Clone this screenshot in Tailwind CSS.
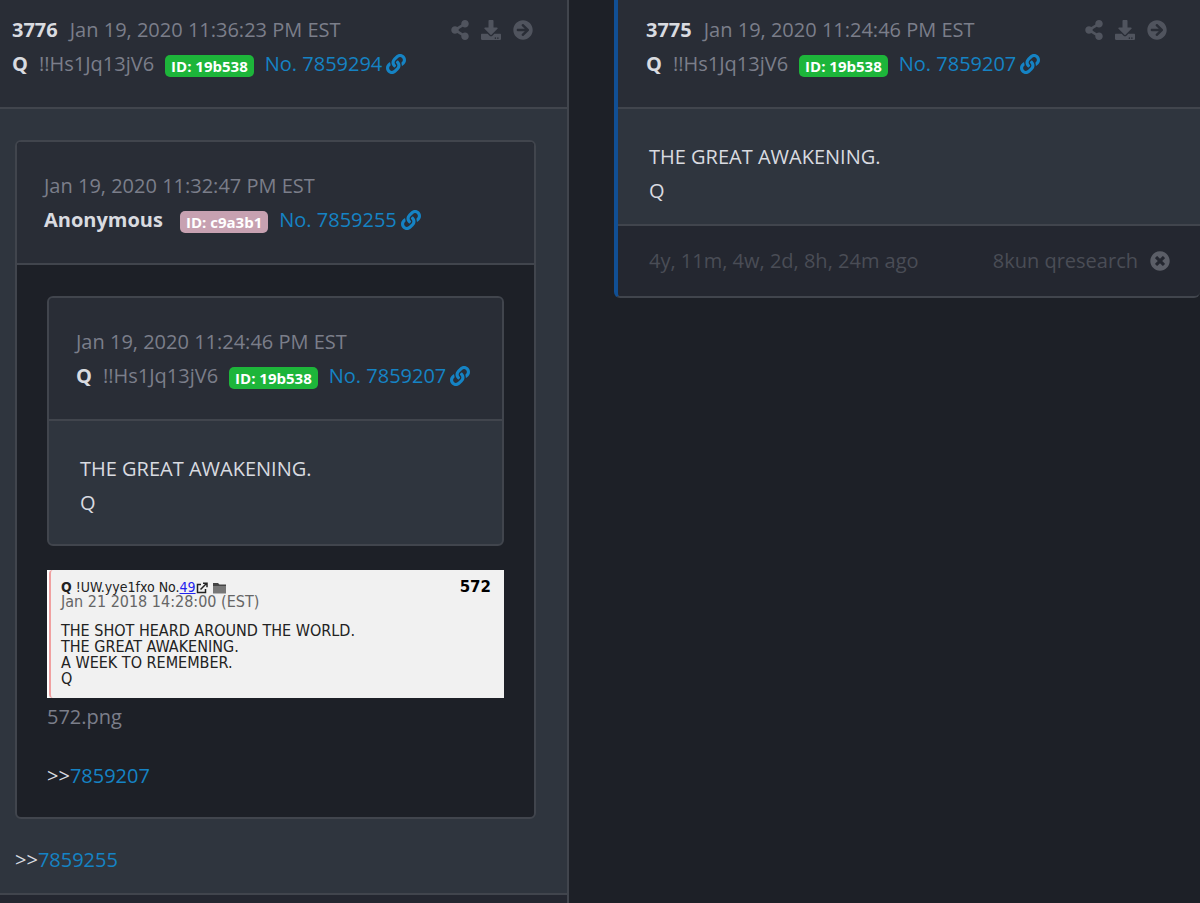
<!DOCTYPE html>
<html lang="en">
<head>
    <meta charset="UTF-8">
    <meta name="viewport" content="width=device-width, initial-scale=1.0">
    <title>Posts</title>
    <script src="https://cdn.jsdelivr.net/npm/@tailwindcss/browser@4"></script>
</head>
<body class="min-h-screen bg-[#1d2027] font-['Open_Sans',sans-serif] text-[20px] leading-[34px] text-[#7b7e8a]">
    <!-- Icon sprites -->
    <svg class="hidden">
        <symbol id="share" viewBox="0 0 448 512"><path d="M352 320c-22.608 0-43.387 7.819-59.79 20.895l-102.486-64.054a96.551 96.551 0 0 0 0-41.683l102.486-64.054C308.613 184.181 329.392 192 352 192c53.019 0 96-42.981 96-96S405.019 0 352 0s-96 42.981-96 96c0 7.158.79 14.13 2.276 20.841L155.79 180.895C139.387 167.819 118.608 160 96 160c-53.019 0-96 42.981-96 96s42.981 96 96 96c22.608 0 43.387-7.819 59.79-20.895l102.486 64.054A96.301 96.301 0 0 0 256 416c0 53.019 42.981 96 96 96s96-42.981 96-96-42.981-96-96-96z"/></symbol>
        <symbol id="download" viewBox="0 0 512 512"><path d="M216 0h80c13.300 0 24 10.700 24 24v168h87.700c17.800 0 26.700 21.500 14.100 34.100L269.700 378.300c-7.500 7.500-19.800 7.500-27.300 0L90.100 226.100c-12.600-12.600-3.700-34.100 14.100-34.100H192V24c0-13.300 10.700-24 24-24zm296 376v112c0 13.300-10.700 24-24 24H24c-13.300 0-24-10.700-24-24V376c0-13.300 10.700-24 24-24h146.700l49 49c20.100 20.100 52.500 20.100 72.600 0l49-49H488c13.300 0 24 10.700 24 24zm-124 88c0-11-9-20-20-20s-20 9-20 20 9 20 20 20 20-9 20-20zm64 0c0-11-9-20-20-20s-20 9-20 20 9 20 20 20 20-9 20-20z"/></symbol>
        <symbol id="arrow" viewBox="0 0 512 512"><path d="M256 8c137 0 248 111 248 248S393 504 256 504 8 393 8 256 119 8 256 8zm-28.900 143.600l75.500 72.400H120c-13.300 0-24 10.700-24 24v16c0 13.300 10.700 24 24 24h182.600l-75.500 72.400c-9.700 9.300-9.900 24.800-.4 34.300l11 10.900c9.400 9.400 24.600 9.400 33.900 0L404.300 273c9.400-9.400 9.400-24.600 0-33.900L271.600 106.300c-9.400-9.400-24.600-9.400-33.900 0l-11 10.900c-9.500 9.600-9.300 25.100.4 34.400z"/></symbol>
        <symbol id="link" viewBox="0 0 512 512"><path d="M326.612 185.391c59.747 59.809 58.927 155.698.36 214.590-.11.12-.24.25-.36.37l-67.200 67.200c-59.270 59.270-155.699 59.262-214.960 0-59.270-59.260-59.270-155.700 0-214.960l37.106-37.106c9.840-9.840 26.786-3.300 27.294 10.606.648 17.722 3.826 35.527 9.690 52.721 1.986 5.822.567 12.262-3.783 16.612l-13.087 13.087c-28.026 28.026-28.905 73.660-1.155 101.960 28.024 28.579 74.086 28.749 102.325.51l67.200-67.190c28.191-28.191 28.073-73.757 0-101.830-3.701-3.694-7.429-6.564-10.341-8.569a16.037 16.037 0 0 1-6.947-12.606c-.396-10.567 3.348-21.456 11.698-29.806l21.054-21.055c5.521-5.521 14.182-6.199 20.584-1.731a152.482 152.482 0 0 1 20.522 17.197zM467.547 44.449c-59.261-59.262-155.690-59.270-214.960 0l-67.200 67.200c-.12.12-.25.25-.36.37-58.566 58.892-59.387 154.781.36 214.590a152.454 152.454 0 0 0 20.521 17.196c6.402 4.468 15.064 3.789 20.584-1.731l21.054-21.055c8.350-8.350 12.094-19.239 11.698-29.806a16.037 16.037 0 0 0-6.947-12.606c-2.912-2.005-6.640-4.875-10.341-8.569-28.073-28.073-28.191-73.639 0-101.830l67.200-67.190c28.239-28.239 74.300-28.069 102.325.51 27.750 28.300 26.872 73.934-1.155 101.960l-13.087 13.087c-4.350 4.350-5.769 10.790-3.783 16.612 5.864 17.194 9.042 34.999 9.690 52.721.509 13.906 17.454 20.446 27.294 10.606l37.106-37.106c59.271-59.259 59.271-155.699.001-214.959z"/></symbol>
        <symbol id="close" viewBox="0 0 512 512"><path d="M256 8C119 8 8 119 8 256s111 248 248 248 248-111 248-248S393 8 256 8zm121.600 313.100c4.700 4.700 4.700 12.300 0 17L338 377.600c-4.700 4.700-12.300 4.700-17 0L256 312l-65.100 65.600c-4.700 4.700-12.300 4.700-17 0L134.400 338c-4.700-4.700-4.700-12.300 0-17l65.600-65-65.600-65.100c-4.700-4.700-4.700-12.300 0-17l39.600-39.600c4.700-4.700 12.300-4.700 17 0l65 65.700 65.100-65.600c4.700-4.700 12.300-4.700 17 0l39.600 39.600c4.700 4.700 4.700 12.300 0 17L312 256l65.600 65.100z"/></symbol>
    </svg>

    <main class="grid min-h-screen grid-cols-[569fr_586fr] items-start gap-x-[45px]">
        <!-- Post 3776 -->
        <article class="flex min-h-screen flex-col border-r-2 border-[#41454d] bg-[#2f353e]">
            <header class="border-b-2 border-[#41454d] bg-[#292d36] pt-[13px] pr-[34px] pb-[26px] pl-3">
                <div class="flex items-center justify-between">
                    <div class="flex gap-3"><strong class="text-[#d9dbe0]">3776</strong><time>Jan 19, 2020 11:36:23 PM EST</time></div>
                    <div class="flex items-center gap-3 text-[#50545e]">
                        <button aria-label="Share"><svg class="h-5 w-[18px] fill-current"><use href="#share"/></svg></button>
                        <button aria-label="Download"><svg class="size-5 fill-current"><use href="#download"/></svg></button>
                        <button aria-label="Open post"><svg class="size-5 fill-current"><use href="#arrow"/></svg></button>
                    </div>
                </div>
                <div class="flex items-center gap-[11px]">
                    <strong class="text-[#d9dbe0]">Q</strong>
                    <span>!!Hs1Jq13jV6</span>
                    <span class="mt-1 rounded-[5px] bg-[#1db53a] px-[6px] text-[15px] leading-[22px] font-bold text-white">ID: 19b538</span>
                    <a href="#" class="flex items-center gap-1 text-[#1583c4]">No. 7859294<svg class="size-5 fill-current"><use href="#link"/></svg></a>
                </div>
            </header>

            <div class="border-b-2 border-[#41454d] pt-[31px] pr-[31px] pb-4 pl-[15px]">
                <section class="overflow-hidden rounded-[6px] border-2 border-[#41454d] bg-[#1d2027]">
                    <header class="border-b-2 border-[#41454d] bg-[#292d36] px-[27px] pt-[27px] pb-[26px]">
                        <time class="block">Jan 19, 2020 11:32:47 PM EST</time>
                        <div class="flex items-center gap-[11px]">
                            <strong class="mr-[6px] text-[#d9dbe0]">Anonymous</strong>
                            <span class="mt-1 rounded-[5px] bg-[#c7a1b1] px-[6px] text-[15px] leading-[22px] font-bold text-white">ID: c9a3b1</span>
                            <a href="#" class="flex items-center gap-1 text-[#1583c4]">No. 7859255<svg class="size-5 fill-current"><use href="#link"/></svg></a>
                        </div>
                    </header>

                    <div class="px-[30px] pt-[31px] pb-6">
                        <section class="overflow-hidden rounded-[6px] border-2 border-[#41454d] bg-[#2f353e]">
                            <header class="border-b-2 border-[#41454d] bg-[#292d36] px-[27px] pt-[27px] pb-[26px]">
                                <time class="block">Jan 19, 2020 11:24:46 PM EST</time>
                                <div class="flex items-center gap-[11px]">
                                    <strong class="text-[#d9dbe0]">Q</strong>
                                    <span>!!Hs1Jq13jV6</span>
                                    <span class="mt-1 rounded-[5px] bg-[#1db53a] px-[6px] text-[15px] leading-[22px] font-bold text-white">ID: 19b538</span>
                                    <a href="#" class="flex items-center gap-1 text-[#1583c4]">No. 7859207<svg class="size-5 fill-current"><use href="#link"/></svg></a>
                                </div>
                            </header>
                            <p class="px-[31px] pt-[31px] pb-6 text-[#d9dbe0]">THE GREAT AWAKENING.<br>Q</p>
                        </section>

                        <!-- Attached post -->
                        <figure class="mt-6">
                            <div class="border-l-2 border-white bg-[#f1f1f1] font-['DejaVu_Sans_Condensed','DejaVu_Sans',sans-serif] text-[#222]">
                                <div class="rounded-l-[4px] border-l-2 border-[#f0a0a0] pt-[10px] pr-[13px] pb-[11px] pl-[10px]">
                                    <div class="flex h-[15px] items-baseline justify-between text-[14px] leading-[15px]">
                                        <div class="flex items-center">
                                            <span><b>Q</b> !UW.yye1fxo No.<a href="#" class="text-[#2222ee] underline">49</a></span>
                                            <svg class="h-3 w-3" viewBox="0 0 12 12" fill="none" stroke="#222" stroke-width="1.500"><path d="M5 2.500H1.500v8h8V7M4.500 7.500L10.500 1.500M7 1.200h4v4"/></svg>
                                            <svg class="ml-1 h-3 w-[15px]" viewBox="0 0 15 12" fill="#777"><path d="M1 1h5l1.500 1.500H14V4H1z" fill="#444"/><path d="M1 4h13v7.500H1z"/></svg>
                                        </div>
                                        <b class="font-['DejaVu_Sans',sans-serif] text-[15px] text-black">572</b>
                                    </div>
                                    <time class="block text-[16px] leading-[13px] text-[#666]">Jan 21 2018 14:28:00 (EST)</time>
                                    <p class="mt-[15px] text-[16px] leading-4">THE SHOT HEARD AROUND THE WORLD.<br>THE GREAT AWAKENING.<br>A WEEK TO REMEMBER.<br>Q</p>
                                </div>
                            </div>
                            <figcaption class="mt-[2px]">572.png</figcaption>
                        </figure>
                        <p class="mt-[25px] text-[#d9dbe0]">&gt;&gt;<a href="#" class="text-[#1583c4]">7859207</a></p>
                    </div>
                </section>
                <p class="mt-6 text-[#d9dbe0]">&gt;&gt;<a href="#" class="text-[#1583c4]">7859255</a></p>
            </div>
            <footer class="grow bg-[#242730]"></footer>
        </article>

        <!-- Post 3775 -->
        <article class="overflow-hidden rounded-b-[6px] border-b-2 border-l-4 border-b-[#41454d] border-l-[#114f94] bg-[#2f353e]">
            <header class="border-b-2 border-[#41454d] bg-[#292d36] pt-[13px] pr-[33px] pb-[26px] pl-7">
                <div class="flex items-center justify-between">
                    <div class="flex gap-3"><strong class="text-[#d9dbe0]">3775</strong><time>Jan 19, 2020 11:24:46 PM EST</time></div>
                    <div class="flex items-center gap-3 text-[#50545e]">
                        <button aria-label="Share"><svg class="h-5 w-[18px] fill-current"><use href="#share"/></svg></button>
                        <button aria-label="Download"><svg class="size-5 fill-current"><use href="#download"/></svg></button>
                        <button aria-label="Open post"><svg class="size-5 fill-current"><use href="#arrow"/></svg></button>
                    </div>
                </div>
                <div class="flex items-center gap-[11px]">
                    <strong class="text-[#d9dbe0]">Q</strong>
                    <span>!!Hs1Jq13jV6</span>
                    <span class="mt-1 rounded-[5px] bg-[#1db53a] px-[6px] text-[15px] leading-[22px] font-bold text-white">ID: 19b538</span>
                    <a href="#" class="flex items-center gap-1 text-[#1583c4]">No. 7859207<svg class="size-5 fill-current"><use href="#link"/></svg></a>
                </div>
            </header>
            <p class="px-[31px] pt-[31px] pb-4 text-[#d9dbe0]">THE GREAT AWAKENING.<br>Q</p>
            <footer class="flex items-center justify-between border-t-2 border-[#41454d] bg-[#242730] py-[18px] pr-[30px] pl-[31px] text-[#4a4d56]">
                <time>4y, 11m, 4w, 2d, 8h, 24m ago</time>
                <div class="flex items-center gap-3">8kun qresearch
                    <button aria-label="Close"><svg class="size-5 fill-[#5b5e67]"><use href="#close"/></svg></button>
                </div>
            </footer>
        </article>
    </main>
</body>
</html>
